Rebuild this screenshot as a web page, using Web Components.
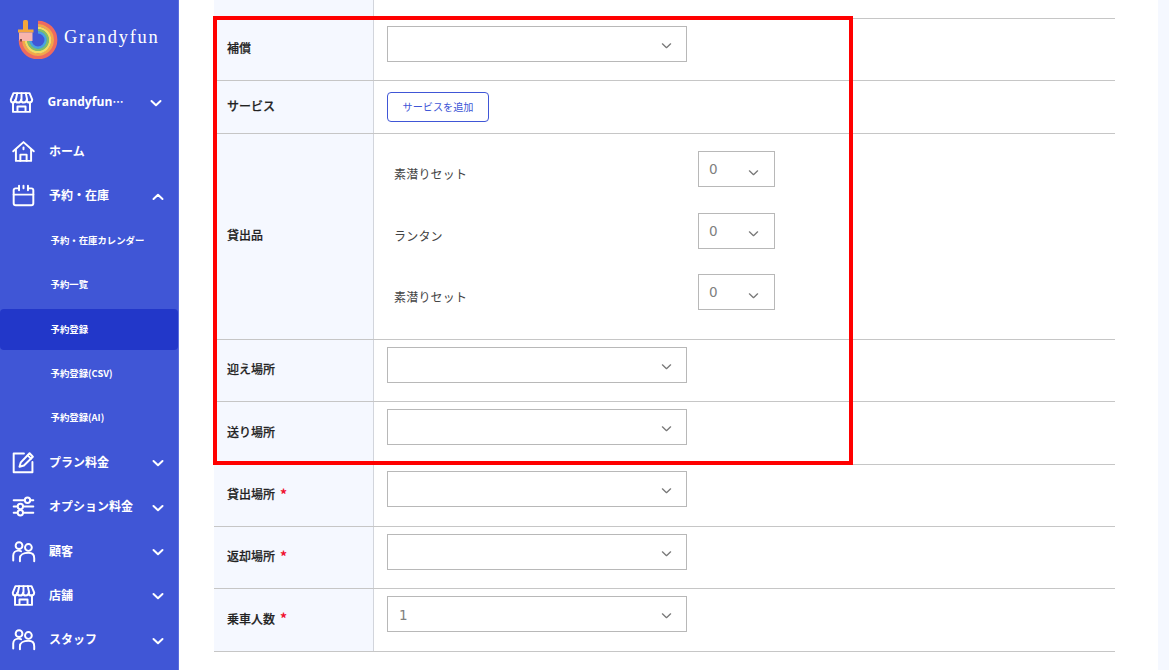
<!DOCTYPE html>
<html lang="ja"><head><meta charset="utf-8"><title>予約登録</title>
<style>
html,body{margin:0;height:100%;overflow:hidden;background:#fff}
body{font-family:"Noto Sans CJK JP","Liberation Sans",sans-serif}
</style></head><body>
<app-shell>
  <app-sidebar slot="side">
    <app-logo></app-logo>
    <nav-item icon="store" chevron="down" first>Grandyfun<span style="font-family:'Noto Sans CJK JP',sans-serif;font-size:11px">⋯</span></nav-item>
    <nav-item icon="home" style="margin-top:5px">ホーム</nav-item>
    <nav-item icon="calendar" chevron="up">予約・在庫</nav-item>
    <nav-sub>予約・在庫カレンダー</nav-sub>
    <nav-sub>予約一覧</nav-sub>
    <nav-sub active>予約登録</nav-sub>
    <nav-sub>予約登録(CSV)</nav-sub>
    <nav-sub>予約登録(AI)</nav-sub>
    <nav-item icon="edit" chevron="down">プラン料金</nav-item>
    <nav-item icon="sliders" chevron="down">オプション料金</nav-item>
    <nav-item icon="users" chevron="down">顧客</nav-item>
    <nav-item icon="store" chevron="down">店舗</nav-item>
    <nav-item icon="users" chevron="down">スタッフ</nav-item>
  </app-sidebar>
  <form-table>
    <form-row h="19" pad="0"></form-row>
    <form-row h="62" label="補償"><pick-box></pick-box></form-row>
    <form-row h="53" pad="11" label="サービス"><add-button>サービスを追加</add-button></form-row>
    <form-row h="206" pad="17" label="貸出品">
      <rental-list>
        <rental-line name="素潜りセット"></rental-line>
        <rental-line name="ランタン"></rental-line>
        <rental-line name="素潜りセット"></rental-line>
      </rental-list>
    </form-row>
    <form-row h="62" label="迎え場所"><pick-box></pick-box></form-row>
    <form-row h="63" label="送り場所"><pick-box></pick-box></form-row>
    <form-row h="62" pad="6" label="貸出場所" required><pick-box></pick-box></form-row>
    <form-row h="62" label="返却場所" required><pick-box></pick-box></form-row>
    <form-row h="63" label="乗車人数" required><pick-box value="1"></pick-box></form-row>
    <red-mark></red-mark>
  </form-table>
</app-shell>
<script>
const ICONS={
 store:'<path d="M5 3.500h18l3 7.200c0 2-1.600 3.300-3.200 3.300s-2.900-1.200-3-3c0 1.800-1.500 3-3.300 3s-2.900-1.200-3-3c-.1 1.800-1.500 3-3.300 3s-3.100-1.200-3.200-3c-.1 1.800-1.400 3-3 3S2 12.700 2 10.700z"/><path d="M9.200 3.500 7.700 10.700M14 3.500v7.200M18.800 3.500l1.500 7.200"/><path d="M4.500 14v10.500h19V14M9.500 24.500V18.500h9v6"/>',
 home:'<path d="M2.500 13.800 14 3.500l11.500 10.300"/><path d="M5.500 12v12.500h17V12"/><path d="M10.500 24.500v-7h7v7"/><path d="M14 9.500v2"/>',
 calendar:'<path d="M8 6H5.200C3.700 6 3 6.800 3 8.200v14.600C3 24.200 3.700 25 5.200 25h17.600c1.500 0 2.200-.8 2.200-2.200V8.200C25 6.800 24.300 6 22.800 6H20"/><path d="M3 13h22M9 3v5M14 3v3M19 3v5"/>',
 edit:'<path d="M14.500 4H3v21h21V13.500"/><path d="M9.500 18.700 11 13.800 20.800 3.700 24.500 7.500 14.500 17.300z"/><path d="M18.700 6l3.700 3.700"/>',
 sliders:'<path d="M3 7h12M22 7h3M3 14h4M14 14h11M3 21h4M14 21h11"/><circle cx="18.500" cy="7" r="3"/><circle cx="10.500" cy="14" r="3"/><circle cx="10.500" cy="21" r="3"/>',
 users:'<circle cx="9" cy="7.500" r="3.800"/><circle cx="19.500" cy="9.500" r="3.800"/><path d="M2.500 24v-5.500c0-3 2.500-5.500 6-5.500 1 0 2 .2 2.800.7"/><path d="M10 25v-3.500c0-3.500 3.800-6 9.500-6s6.500 3 6.500 6V25"/>'
};
const chev=(d,c,w,s=12)=>`<svg width="${s}" height="${s*8/12}" viewBox="0 0 12 8" fill="none" stroke="${c}" stroke-width="${w}" stroke-linecap="round" stroke-linejoin="round"><path d="${d==='up'?'M1.500 6 6 1.800 10.500 6':'M1.500 2 6 6.200 10.500 2'}"/></svg>`;
function def(name,render){
  customElements.define(name,class extends HTMLElement{
    connectedCallback(){ if(this.shadowRoot)return; this.attachShadow({mode:'open'}).innerHTML=render(this); }
  });
}
def('app-shell',()=>`<style>
:host{display:flex;width:1169px;height:670px;overflow:hidden;background:#fff}
.side{flex:0 0 179px}.main{flex:1;min-width:0;padding:0 43px 0 35px}.strip{flex:0 0 11px;background:#f5f8ff}
</style><div class="side"><slot name="side"></slot></div><div class="main"><slot></slot></div><div class="strip"></div>`);
def('app-sidebar',()=>`<style>
:host{display:flex;flex-direction:column;height:670px;background:#4056d6;color:#fff;overflow:hidden;box-shadow:inset -1px 0 0 #5a6dde}
</style><slot></slot>`);
def('app-logo',()=>`<style>
:host{display:flex;align-items:center;height:80px;padding-left:17px;gap:6px;flex:none;box-sizing:border-box}
svg{display:block;margin-top:-4px}
span{font:18.500px "Liberation Serif",serif;letter-spacing:1.700px;color:#fff;margin-top:-5px}
</style><svg width="41" height="42" viewBox="0 0 41 42" fill="none">
<path d="M21 5.500A17.500 17.500 0 1 1 3.500 23" stroke="#ee6a5f" stroke-width="3.700"/>
<path d="M21 8.400A14.600 14.600 0 1 1 6.400 23" stroke="#f6a548" stroke-width="2.800"/>
<path d="M21 11A12 12 0 1 1 9 23" stroke="#f3dc63" stroke-width="2.600"/>
<path d="M21 13.300A9.700 9.700 0 1 1 11.300 23" stroke="#7fbf6a" stroke-width="2.600"/>
<path d="M21 15.400A7.600 7.600 0 1 1 13.400 23" stroke="#4aa3e0" stroke-width="2.200"/>
<rect x="6" y="3" width="5" height="11" rx="1.500" fill="#f4a63c"/>
<rect x="1" y="12.500" width="15.500" height="3" fill="#f4a63c"/>
<path d="M2 15.500h13.500v8.500H4c-1.300 0-2-.7-2-2z" fill="#f8b4ac"/>
<path d="M3 22h2v2.500H3z" fill="#7c4a4a"/>
</svg><span>Grandyfun</span>`);
def('nav-item',el=>{
  const ic=el.getAttribute('icon'),c=el.getAttribute('chevron'),f=el.hasAttribute('first');
  return `<style>
:host{display:flex;align-items:center;height:44.400px;flex:none;padding-left:${f?'9px':'10.500px'};font-size:12px;font-weight:700;color:#fff;position:relative}
svg.i{flex:none;display:block}
.t{margin-left:13.500px;white-space:nowrap;margin-top:-2px;${f?'font-family:"Open Sans","Noto Sans CJK JP",sans-serif;font-size:12px;letter-spacing:.1px;':''}}
.c{position:absolute;left:${f?'149.500px':'152px'};top:calc(50% - 3px);line-height:0}
</style><svg class="i" width="25" height="25" viewBox="0 0 28 28" fill="none" stroke="#fff" stroke-width="2.200" stroke-linecap="round" stroke-linejoin="round">${ICONS[ic]}</svg><span class="t"><slot></slot></span>${c?`<span class="c">${chev(c,'#fff',2)}</span>`:''}`;
});
def('nav-sub',el=>`<style>
:host{display:flex;align-items:center;height:44.400px;flex:none;font-size:9.400px;font-weight:700;color:#fff;white-space:nowrap}
.b{flex:1;display:flex;align-items:center;height:41px;padding-left:50.500px;margin:1px 1px 0 0;border-radius:4px;${el.hasAttribute('active')?'background:#2237c9;':''}}
span{margin-top:-2px}
</style><div class="b"><span><slot></slot></span></div>`);
def('form-table',()=>`<style>:host{display:block;position:relative;font-size:12px;color:#222}</style><slot></slot>`);
def('form-row',el=>{
  const h=el.getAttribute('h'),p=el.getAttribute('pad')??7,l=el.getAttribute('label')||'';
  return `<style>
:host{display:grid;grid-template-columns:160px 1fr;height:${h}px;box-sizing:border-box;border-bottom:1px solid #c6c6c6}
.l{display:flex;align-items:center;gap:5px;padding:0 0 4px 13px;background:#f5f8ff;border-right:1.500px solid #d2d5dc;font-weight:500;font-size:12px;color:#222;-webkit-text-stroke:.2px #222}
.r{color:#f01030;font-size:14px;line-height:12px;font-weight:700;-webkit-text-stroke:0}
.v{padding:${p}px 0 0 13px}
</style><div class="l">${l?`<span>${l}</span>`:''}${el.hasAttribute('required')?'<span class="r">*</span>':''}</div><div class="v"><slot></slot></div>`;
});
def('pick-box',el=>{
  const v=el.getAttribute('value')||'';
  return `<style>
:host{display:flex;align-items:center;justify-content:space-between;box-sizing:border-box;width:300px;height:36px;border:1px solid #b8b8b8;background:#fff;padding:0 14.500px 0 11px;font:13.500px "DejaVu Sans",sans-serif;color:#808080}
span{margin-top:1px}svg{display:block;margin-top:3px}
</style><span>${v}</span>${chev('down','#777',1.400,11)}`;
});
def('add-button',()=>`<style>
:host{display:flex;align-items:center;justify-content:center;box-sizing:border-box;width:102px;height:30px;border:1px solid #4056d6;border-radius:4px;color:#4056d6;font-size:10.150px;background:#fff;padding-bottom:2px}
</style><slot></slot>`);
def('rental-list',()=>`<style>:host{display:flex;flex-direction:column;gap:25.500px}</style><slot></slot>`);
def('rental-line',el=>`<style>
:host{display:grid;grid-template-columns:311px 77px;height:36px;align-items:center;font-size:12px;color:#444;letter-spacing:.2px}
.n{padding:9px 0 0 7px}
.s{display:flex;align-items:center;justify-content:space-between;box-sizing:border-box;width:77px;height:36px;border:1px solid #b8b8b8;padding:0 15px 0 10px;font:13.500px "DejaVu Sans",sans-serif;color:#808080;letter-spacing:0}
.s span{margin-top:0}.s svg{display:block;margin-top:7px}
</style><div class="n">${el.getAttribute('name')}</div><div class="s"><span>0</span>${chev('down','#777',1.400,11)}</div>`);
def('red-mark',()=>`<style>
:host{position:absolute;left:-1px;top:16px;width:640px;height:449px;box-sizing:border-box;border:4px solid #ff0000;pointer-events:none}
</style>`);
</script>
</body></html>
